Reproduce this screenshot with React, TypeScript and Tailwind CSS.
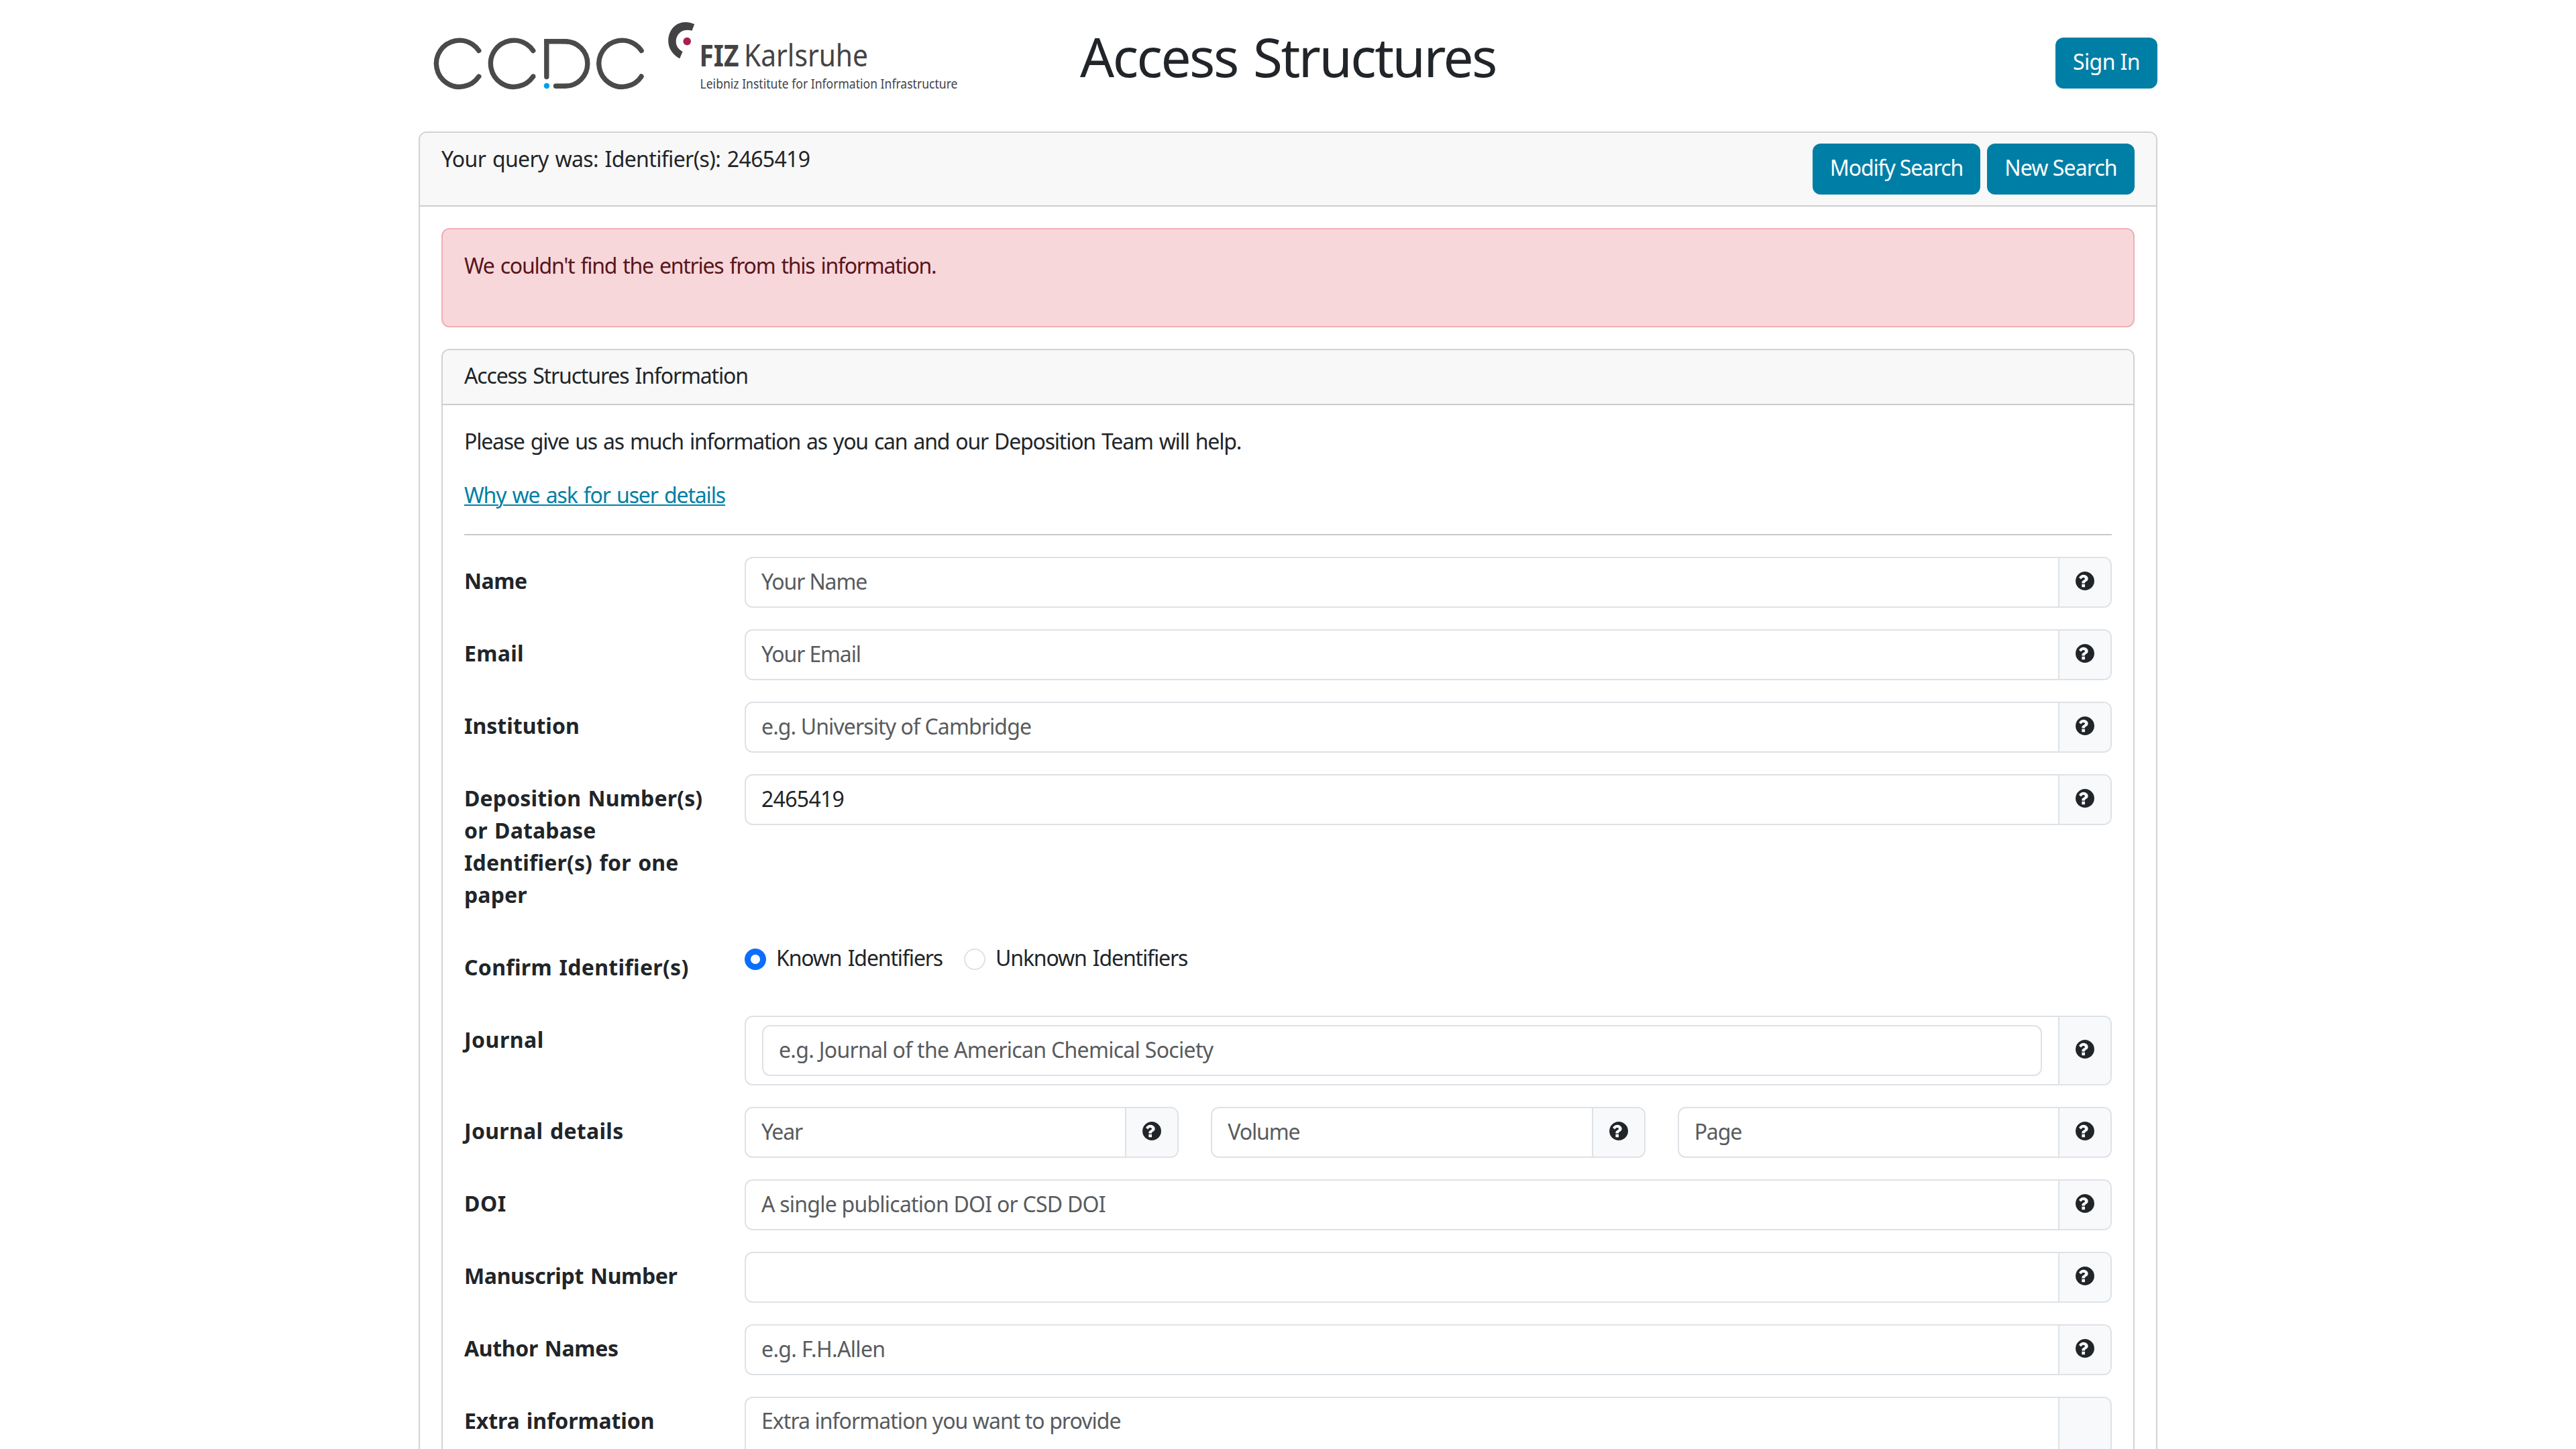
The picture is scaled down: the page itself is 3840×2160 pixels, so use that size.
import type { ReactNode } from 'react';
import clsx from 'clsx';

type FieldProps = {
    placeholder?: string;
    value?: string;
    tracking?: string;
};

function CcdcLogo() {
    const arc = { r: 34.6, pathLength: 360, strokeDasharray: '292.4 67.6' };

    return (
        <svg width="240" height="80" viewBox="644 55 240 80" className="overflow-visible">
            <g fill="none" stroke="#4a4a48" strokeWidth="7.4" strokeLinecap="round">
                <circle {...arc} cx="685" cy="94.8" transform="rotate(33.8 685 94.8)" />
                <circle {...arc} cx="766" cy="94.8" transform="rotate(33.8 766 94.8)" />
                <circle {...arc} cx="927.4" cy="94.8" transform="rotate(33.8 927.4 94.8)" />
                <line x1="814.8" y1="62" x2="814.8" y2="114.5" />
                <line x1="814.8" y1="61.7" x2="842.5" y2="61.7" strokeLinecap="square" />
                <circle
                    cx="842.5"
                    cy="95"
                    r="33.3"
                    pathLength="360"
                    strokeDasharray="180 180"
                    strokeLinecap="butt"
                    transform="rotate(-90 842.5 95)"
                />
                <line x1="828.5" y1="128.3" x2="842.5" y2="128.3" />
            </g>
            <circle cx="814.9" cy="128" r="4.2" fill="#009fe8" />
        </svg>
    );
}

function FizLogo() {
    return (
        <svg
            width="520"
            height="120"
            viewBox="994 26 520 120"
            fill="#434345"
            fontFamily="'Noto Sans', sans-serif"
            className="tracking-normal [word-spacing:0]"
        >
            <path d="M1035.2 36C1015 26.5 996.2 40 996.2 61C996.2 72 1002.5 81.5 1013.2 87.3L1017.6 77C1011 73.5 1007.7 68 1007.7 62C1007.7 50 1018 41.5 1031.5 45.8Z" />
            <circle cx="1024.2" cy="61.6" r="5.8" fill="#a81e55" />
            <text x="1042.5" y="99.3" fontSize="45" fontWeight="700" textLength="59" lengthAdjust="spacingAndGlyphs">
                FIZ
            </text>
            <text x="1109" y="99.3" fontSize="45" textLength="185" lengthAdjust="spacingAndGlyphs">
                Karlsruhe
            </text>
            <text x="1043.5" y="131.5" fontSize="20.5" textLength="384" lengthAdjust="spacingAndGlyphs">
                Leibniz Institute for Information Infrastructure
            </text>
        </svg>
    );
}

function HelpIcon() {
    return (
        <svg width="28" height="28" viewBox="128 128 1536 1536" fill="#212529" className="-mt-1">
            <path d="M896 1376v-192q0-14-9-23t-23-9h-192q-14 0-23 9t-9 23v192q0 14 9 23t23 9h192q14 0 23-9t9-23zm256-672q0-88-55.5-163t-138.5-116-170-41q-243 0-371 213-15 24 8 42l132 100q7 6 19 6 16 0 25-12 53-68 86-92 34-24 86-24 48 0 85.5 26t37.5 59q0 38-20 61t-68 45q-63 28-115.5 86.5t-52.5 125.5v36q0 14 9 23t23 9h192q14 0 23-9t9-23q0-19 21.5-49.5t54.5-49.5q32-18 49-28.5t46-35 44.5-48 28-60.5 12.5-81zm512 192q0 209-103 385.5t-279.5 279.5-385.5 103-385.5-103-279.5-279.5-103-385.5 103-385.5 279.5-279.5 385.5-103 385.5 103 279.5 279.5 103 385.5z" />
        </svg>
    );
}

function Button({ children, className }: { children: ReactNode; className?: string }) {
    return (
        <button className={clsx('h-[76px] rounded-xl bg-[#007fa6] pb-1 text-white', className)}>{children}</button>
    );
}

function InputGroup({ children, help = true }: { children: ReactNode; help?: boolean }) {
    return (
        <div className="flex overflow-hidden rounded-xl border-2 border-[#dee2e6]">
            <div className="min-w-0 flex-1">{children}</div>
            <div className="flex w-[78px] items-center justify-center border-l-2 border-[#dee2e6] bg-[#f8f9fa]">
                {help && <HelpIcon />}
            </div>
        </div>
    );
}

function TextField({ placeholder, value, tracking }: FieldProps) {
    return (
        <InputGroup>
            <input
                type="text"
                defaultValue={value}
                placeholder={placeholder}
                className={clsx('block h-[72px] w-full pr-6 pb-1 pl-[23px] placeholder:text-[#585b5e]', tracking)}
            />
        </InputGroup>
    );
}

function FormRow({ label, tracking = 'tracking-normal', children }: { label: string; tracking?: string; children: ReactNode }) {
    return (
        <div className="mb-8 flex gap-12">
            <label className={clsx('w-[370px] shrink-0 pt-3 pb-4 font-bold', tracking)}>{label}</label>
            <div className="min-w-0 flex-1">{children}</div>
        </div>
    );
}

function Radio({ label, checked }: { label: string; checked?: boolean }) {
    return (
        <label className="flex h-12 gap-[15px]">
            <span
                className={clsx(
                    'mt-2 flex size-8 items-center justify-center rounded-full',
                    checked ? 'bg-[#0d6efd]' : 'border-2 border-[#dee2e6]'
                )}
            >
                {checked && <span className="size-3.5 rounded-full bg-white" />}
            </span>
            <span className="-mt-0.5">{label}</span>
        </label>
    );
}

export default function App() {
    return (
        <div className="h-[2160px] w-[3840px] overflow-hidden bg-white font-['Noto_Sans',sans-serif] text-[32px]/[48px] tracking-[-1.15px] text-[#212529] [word-spacing:2px]">
            <div className="mx-auto w-[2592px]">
                <header className="grid h-[196px] grid-cols-[1fr_auto_1fr] items-start">
                    <div className="flex items-start pt-[26px] pl-5">
                        <div className="mt-[29px] mr-[110px]">
                            <CcdcLogo />
                        </div>
                        <FizLogo />
                    </div>
                    <h1 className="pt-9 text-[80px]/[96px] tracking-[-2.5px] [word-spacing:5px]">Access Structures</h1>
                    <div className="flex justify-end pt-14">
                        <Button className="w-[152px] tracking-[-0.6px]">Sign In</Button>
                    </div>
                </header>

                <section className="rounded-t-xl border-2 border-[#d2d2d2]">
                    <div className="flex items-start justify-between rounded-t-[10px] border-b-2 border-[#cccccc] bg-[#f8f8f8] px-8 py-4">
                        <p className="-mt-px tracking-[-0.65px]">Your query was: Identifier(s): 2465419</p>
                        <div className="flex gap-2.5">
                            <Button className="w-[250px]">Modify Search</Button>
                            <Button className="w-[220px] tracking-[-0.9px]">New Search</Button>
                        </div>
                    </div>

                    <div className="p-8">
                        <div className="mb-8 h-[148px] rounded-xl border-2 border-[#f1aeb5] bg-[#f8d7da] px-8 pt-[30px] tracking-[-1.25px] text-[#58151c]">
                            We couldn't find the entries from this information.
                        </div>

                        <div className="rounded-xl border-2 border-[#d2d2d2]">
                            <div className="rounded-t-[10px] border-b-2 border-[#cccccc] bg-[#f8f8f8] px-8 pt-3.5 pb-[18px]">
                                Access Structures Information
                            </div>

                            <div className="px-8 pt-[30px] pb-8">
                                <p className="mb-8 tracking-[-1.22px]">
                                    Please give us as much information as you can and our Deposition Team will help.
                                </p>
                                <p>
                                    <a href="#" className="text-[#007fa6] underline decoration-2 underline-offset-2">
                                        Why we ask for user details
                                    </a>
                                </p>
                                <hr className="mt-[34px] mb-8 border-t-2 border-[#c8c9ca]" />

                                <FormRow label="Name" tracking="tracking-[-0.5px]">
                                    <TextField placeholder="Your Name" />
                                </FormRow>
                                <FormRow label="Email" tracking="tracking-[0.3px]">
                                    <TextField placeholder="Your Email" />
                                </FormRow>
                                <FormRow label="Institution">
                                    <TextField placeholder="e.g. University of Cambridge" tracking="tracking-[-0.9px]" />
                                </FormRow>
                                <FormRow
                                    label="Deposition Number(s) or Database Identifier(s) for one paper"
                                    tracking="tracking-[0.15px]"
                                >
                                    <TextField value="2465419" tracking="tracking-[-0.7px]" />
                                </FormRow>
                                <FormRow label="Confirm Identifier(s)" tracking="tracking-[0.3px]">
                                    <div className="flex gap-8">
                                        <Radio label="Known Identifiers" checked />
                                        <Radio label="Unknown Identifiers" />
                                    </div>
                                </FormRow>
                                <FormRow label="Journal" tracking="tracking-[0.5px]">
                                    <InputGroup>
                                        <div className="px-6 py-3">
                                            <input
                                                type="text"
                                                placeholder="e.g. Journal of the American Chemical Society"
                                                className="block h-[76px] w-full rounded-xl border-2 border-[#dee2e6] pr-6 pb-1 pl-[23px] tracking-[-0.7px] placeholder:text-[#585b5e]"
                                            />
                                        </div>
                                    </InputGroup>
                                </FormRow>
                                <FormRow label="Journal details" tracking="tracking-[0.3px]">
                                    <div className="grid grid-cols-3 gap-12">
                                        <TextField placeholder="Year" />
                                        <TextField placeholder="Volume" />
                                        <TextField placeholder="Page" />
                                    </div>
                                </FormRow>
                                <FormRow label="DOI" tracking="tracking-[0.5px]">
                                    <TextField
                                        placeholder="A single publication DOI or CSD DOI"
                                        tracking="tracking-[-0.77px]"
                                    />
                                </FormRow>
                                <FormRow label="Manuscript Number" tracking="tracking-[-0.35px]">
                                    <TextField />
                                </FormRow>
                                <FormRow label="Author Names" tracking="tracking-[-0.35px]">
                                    <TextField placeholder="e.g. F.H.Allen" tracking="tracking-[-0.65px]" />
                                </FormRow>
                                <FormRow label="Extra information" tracking="tracking-[-0.1px]">
                                    <InputGroup help={false}>
                                        <textarea
                                            placeholder="Extra information you want to provide"
                                            className="block h-[168px] w-full resize-none pt-2.5 pr-6 pl-[23px] tracking-[-0.95px] placeholder:text-[#585b5e]"
                                        />
                                    </InputGroup>
                                </FormRow>
                            </div>
                        </div>
                    </div>
                </section>
            </div>
        </div>
    );
}
